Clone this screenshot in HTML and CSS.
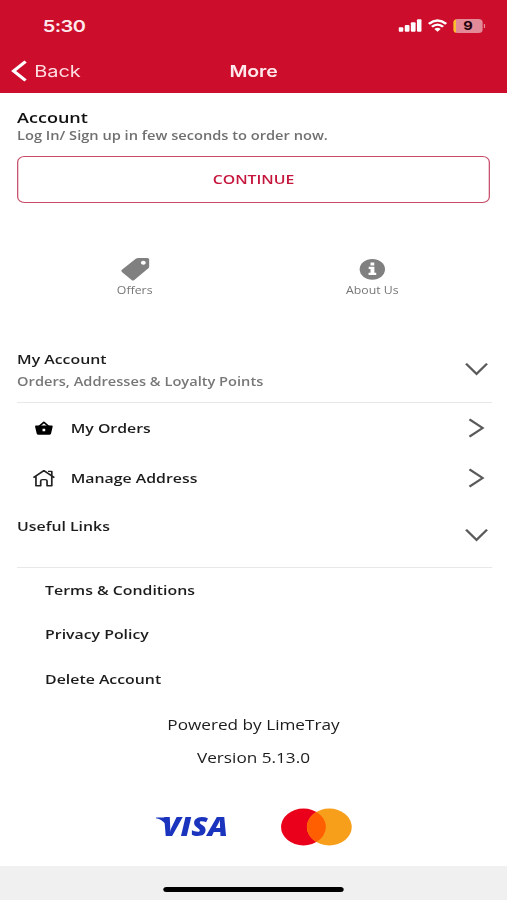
FILE: index.html
```html
<!DOCTYPE html>
<html lang="en">
<head>
    <meta charset="utf-8">
    <title>More</title>
    <link rel="stylesheet" href="styles.css">
</head>
<body>
<div class="screen">
    <div class="header">
        <div class="status">
            <div class="time">5:30</div>
            <div class="status-icons">
                <svg class="signal" width="19" height="13" viewBox="0 0 19 13">
                    <rect x="0" y="8.3" width="3.9" height="4.4" rx="1"/>
                    <rect x="5.1" y="6" width="3.9" height="6.7" rx="1"/>
                    <rect x="10.1" y="3.3" width="3.9" height="9.4" rx="1"/>
                    <rect x="15.1" y="0.3" width="3.9" height="12.4" rx="1"/>
                </svg>
                <svg class="wifi" width="16" height="13" viewBox="0 0 16 13">
                    <path d="M0.9 4.8 Q8 -1.8 15.1 4.8" fill="none" stroke="#fff" stroke-width="2.3"/>
                    <path d="M3.4 7.8 Q8 3.5 12.6 7.8" fill="none" stroke="#fff" stroke-width="2.2"/>
                    <path d="M5.4 9.9 Q8 7.6 10.6 9.9 L8 12.8Z" fill="#fff"/>
                </svg>
                <div class="battery">9</div>
                <div class="battery-cap"></div>
            </div>
        </div>
        <div class="nav">
            <div class="back">
                <svg width="13" height="22" viewBox="0 0 13 22">
                    <path d="M12 1.5 L2.2 11 L12 20.5" fill="none" stroke="#fff" stroke-width="2.9"/>
                </svg>
                <span>Back</span>
            </div>
            <div class="title">More</div>
            <div></div>
        </div>
    </div>

    <div class="login">
        <div class="login-title">Account</div>
        <div class="login-text">Log In/ Sign up in few seconds to order now.</div>
        <div class="btn">CONTINUE</div>
    </div>

    <div class="tabs">
        <div class="tab">
            <svg width="24" height="24" viewBox="0 0 24 24">
                <path fill-rule="evenodd" d="M14.6 1 H22 Q23.4 1 23.4 2.6 V9.4 Q23.4 10.6 22.5 11.6 L11.2 22.9 Q10.1 23.9 9 22.9 L1 15 Q0 13.9 1 12.8 L12.4 1.8 Q13.3 1 14.6 1Z M18.6 3.8 a2 2 0 1 0 0.01 0Z" fill="#808080"/>
            </svg>
            <span>Offers</span>
        </div>
        <div class="tab">
            <svg width="24" height="24" viewBox="0 0 24 24">
                <circle cx="11.5" cy="12.3" r="10.4" fill="#808080"/>
                <path d="M10 5.6 h3.1 v2.9 h-3.1Z M8.5 9.8 h4.7 v6 h1.5 v2.2 h-6.3 v-2.2 h1.6 v-3.8 h-1.5Z" fill="#fff"/>
            </svg>
            <span>About Us</span>
        </div>
    </div>

    <div class="section account">
        <div>
            <div class="section-title">My Account</div>
            <div class="section-text">Orders, Addresses &amp; Loyalty Points</div>
        </div>
        <svg class="arrow" width="20" height="14" viewBox="0 0 20 14">
            <path d="M1.4 1.6 L10 12 L18.6 1.6"/>
        </svg>
    </div>
    <div class="row">
        <svg class="row-icon" width="20" height="20" viewBox="0 0 20 20">
            <path d="M6 8.5 L10 4.2 L14 8.5" fill="none" stroke="#000" stroke-width="1.5" stroke-linejoin="round"/>
            <path fill-rule="evenodd" d="M3.5 7.6 H16.5 Q17.4 7.6 17.2 8.8 L15.9 15.4 Q15.6 16.8 14.4 16.8 H5.6 Q4.4 16.8 4.1 15.4 L2.8 8.8 Q2.6 7.6 3.5 7.6Z M8.9 10.8 V13.2 H11.1 V10.8Z" fill="#000"/>
        </svg>
        <span>My Orders</span>
        <svg class="arrow" width="14" height="20" viewBox="0 0 14 20">
            <path d="M1.2 1.4 L12 10 L1.2 18.6"/>
        </svg>
    </div>
    <div class="row">
        <svg class="row-icon" width="20" height="20" viewBox="0 0 20 20">
            <path d="M1.4 9.6 L10 2.6 L18.6 9.6 M3.5 8.2 V17.8 H7.4 V13 Q7.4 11.6 8.8 11.6 H11.2 Q12.6 11.6 12.6 13 V17.8 H16.5 V8.2 M13.4 3.4 H16.5 V7.4" fill="none" stroke="#222" stroke-width="1.4" stroke-linejoin="round"/>
        </svg>
        <span>Manage Address</span>
        <svg class="arrow" width="14" height="20" viewBox="0 0 14 20">
            <path d="M1.2 1.4 L12 10 L1.2 18.6"/>
        </svg>
    </div>

    <div class="section links">
        <div class="section-title">Useful Links</div>
        <svg class="arrow" width="20" height="14" viewBox="0 0 20 14">
            <path d="M1.4 1.6 L10 12 L18.6 1.6"/>
        </svg>
    </div>
    <div class="link">Terms &amp; Conditions</div>
    <div class="link">Privacy Policy</div>
    <div class="link">Delete Account</div>

    <div class="about">
        <div>Powered by LimeTray</div>
        <div>Version 5.13.0</div>
    </div>

    <div class="cards">
        <svg width="64" height="38" viewBox="0 0 64 38">
            <path d="M1 9.4 H9.6 L10.5 19 Q7 11.6 1 10.2Z" fill="#1a34bd"/>
            <text class="visa" x="6" y="28" textLength="54" lengthAdjust="spacingAndGlyphs">VISA</text>
        </svg>
        <svg width="60" height="38" viewBox="0 0 60 38">
            <circle cx="19" cy="19" r="18.4" fill="#eb001b"/>
            <circle cx="40.2" cy="19" r="18.4" fill="#f79e1b"/>
            <path d="M29.6 4 A18.4 18.4 0 0 1 29.6 34 A18.4 18.4 0 0 1 29.6 4Z" fill="#ff5f00"/>
        </svg>
    </div>

    <div class="footer">
        <div class="home-bar"></div>
    </div>
</div>
</body>
</html>
```
FILE: styles.css
```css
*{
    box-sizing: border-box;
}
html,body{
    margin: 0;
    height: 900px;
    overflow: hidden;
    background-color: #fff;
}
/* the app is 416px wide and stretched to fill the window */
.screen{
    display: flex;
    flex-direction: column;
    width: 416px;
    height: 900px;
    transform: scaleX(1.21875);
    transform-origin: 0 0;
    font-family: "Open Sans", sans-serif;
    font-weight: 600;
    color: #1c1c1c;
}
svg{
    display: block;
    flex-shrink: 0;
}
.header{
    height: 93px;
    background-color: #cc0e2c;
    color: #fff;
    font-family: Inter, sans-serif;
}
.status{
    display: flex;
    justify-content: space-between;
    align-items: center;
    height: 49px;
    padding: 2px 18px 0 35px;
}
.time{
    font-size: 16.4px;
    letter-spacing: -0.4px;
    color: #ffe9ec;
}
.status-icons{
    display: flex;
    align-items: center;
}
.signal{
    fill: #fff;
}
.wifi{
    margin: 0 5px 0 5px;
}
.battery{
    width: 24px;
    height: 14px;
    border-radius: 3.5px;
    background: linear-gradient(90deg, #fbc02d 2.5px, #e38a99 2.5px);
    color: #200008;
    font-size: 12px;
    font-weight: 700;
    line-height: 14px;
    text-align: center;
}
.battery-cap{
    width: 1px;
    height: 4px;
    margin-left: 1px;
    background-color: #e38a99;
}
.nav{
    display: grid;
    grid-template-columns: 1fr auto 1fr;
    align-items: center;
    height: 44px;
    font-size: 16px;
}
.back{
    display: flex;
    align-items: center;
    gap: 6px;
    padding-left: 9px;
    font-size: 16.4px;
    font-weight: 400;
    color: #ffdde1;
}
.title{
    letter-spacing: -0.1px;
    color: #ffe9ec;
}
.login{
    padding: 13px 14px 0;
}
.login-title{
    font-size: 14.8px;
    line-height: 22px;
    color: #111;
}
.login-text{
    font-size: 12px;
    line-height: 15px;
    color: #707070;
}
.btn{
    height: 47px;
    margin-top: 13px;
    border: 1px solid #c64a66;
    border-radius: 6px;
    line-height: 45px;
    text-align: center;
    font-size: 13px;
    color: #c5173d;
}
.tabs{
    display: flex;
    height: 143px;
    padding: 54px 13px 0;
}
.tab{
    display: flex;
    flex: 1;
    flex-direction: column;
    align-items: center;
    font-size: 10.1px;
    font-weight: 400;
    line-height: 19px;
    color: #777;
}
.section{
    display: flex;
    justify-content: space-between;
    margin: 0 12px 0 14px;
    padding-right: 3.5px;
    border-bottom: 1px solid #e8e8e8;
}
.account{
    height: 57px;
}
.section-title{
    font-size: 13px;
    line-height: 27px;
}
.section-text{
    font-size: 12px;
    line-height: 18px;
    color: #777;
}
.arrow{
    fill: none;
    stroke: #5a5a5a;
    stroke-width: 2;
}
.section .arrow{
    margin-top: 16px;
}
.row{
    display: flex;
    align-items: center;
    height: 50px;
    padding: 0 18.5px 0 26px;
    font-size: 13px;
}
.row span{
    flex: 1;
    margin-left: 12px;
}
.links{
    height: 65px;
    padding-top: 10px;
}
.links .arrow{
    margin-top: 15px;
}
.link{
    height: 44.4px;
    padding-left: 37px;
    font-size: 13px;
    line-height: 44.4px;
}
.about{
    margin-top: 7px;
    text-align: center;
    font-size: 14.1px;
    font-weight: 400;
    line-height: 33px;
}
.cards{
    display: flex;
    justify-content: center;
    gap: 39px;
    margin-top: 34px;
}
.visa{
    font-size: 26px;
    font-weight: 800;
    font-style: italic;
    fill: #1a34bd;
}
.footer{
    height: 34px;
    margin-top: auto;
    padding-top: 21px;
    background-color: #f0f0f0;
}
.home-bar{
    width: 148px;
    height: 5px;
    margin: 0 auto;
    border-radius: 3px;
    background-color: #000;
}
```
